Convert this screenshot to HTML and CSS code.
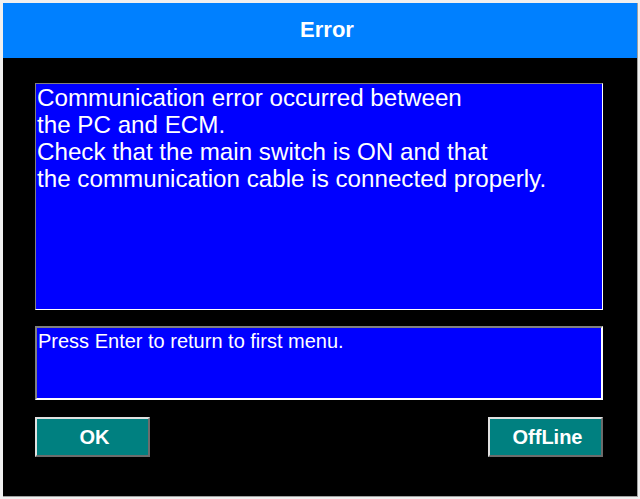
FILE: index.html
```html
<!DOCTYPE html>
<html>
<head>
<meta charset="utf-8">
<link rel="stylesheet" href="styles.css">
</head>
<body>
<div class="window">
  <div class="titlebar">Error</div>
  <div class="content">
    <div class="msg">Communication error occurred between<br>the PC and ECM.<br>Check that the main switch is ON and that<br>the communication cable is connected properly.</div>
    <div class="hint">Press Enter to return to first menu.</div>
    <div class="buttons">
      <div class="btn">OK</div>
      <div class="btn">OffLine</div>
    </div>
  </div>
</div>
</body>
</html>
```
FILE: styles.css
```css
html, body {
  margin: 0;
  padding: 0;
  background: #f0f0f0;
  width: 640px;
  height: 499px;
  overflow: hidden;
}
.window {
  margin: 3px 0 0 3px;
  width: 634px;
  height: 493px;
  background: #000;
  border-right: 1px solid #a0a0a0;
  border-bottom: 1px solid #a0a0a0;
  display: flex;
  flex-direction: column;
  font-family: "Liberation Sans", Arial, sans-serif;
  color: #fff;
}
.titlebar {
  height: 55px;
  background: #0080ff;
  display: flex;
  align-items: center;
  justify-content: center;
  padding-left: 14px;
  padding-bottom: 1px;
  box-sizing: border-box;
  font-weight: bold;
  font-size: 22px;
}
.content {
  padding: 25px 34px 0 32px;
  display: flex;
  flex-direction: column;
}
.msg, .hint {
  background: #0000ff;
  box-sizing: border-box;
  border-style: solid;
  border-width: 1px;
  border-color: #808080 #ffffff #ffffff #808080;
}
.msg {
  height: 227px;
  font-size: 24.2px;
  line-height: 27px;
  padding: 0 0 0 1px;
}
.hint {
  margin-top: 16px;
  height: 74px;
  border-width: 2px;
  font-size: 20px;
  line-height: 24px;
  padding: 1px 0 0 1px;
}
.buttons {
  margin-top: 17px;
  display: flex;
  justify-content: space-between;
}
.btn {
  width: 115px;
  height: 40px;
  box-sizing: border-box;
  background: #008080;
  border-style: solid;
  border-width: 2px;
  border-color: #e0e0e0 #6c6c6c #6c6c6c #e0e0e0;
  display: flex;
  align-items: center;
  justify-content: center;
  padding-left: 4px;
  font-weight: bold;
  font-size: 20px;
}
```
